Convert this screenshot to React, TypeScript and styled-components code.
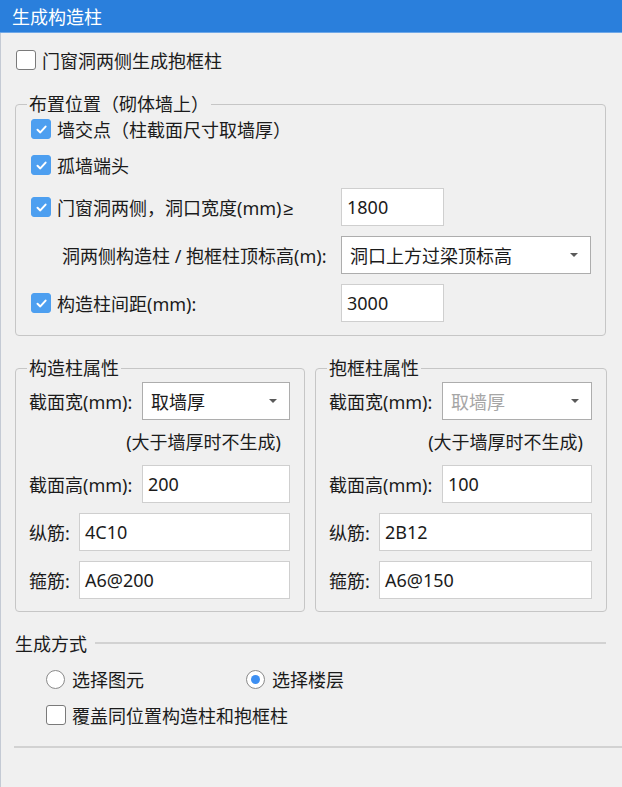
import React from "react";
import styled, { createGlobalStyle } from "styled-components";

const GlobalStyle = createGlobalStyle`
  html, body {
    margin: 0;
    padding: 0;
    background: #f0f0f0;
  }
  body {
    font-family: "Noto Sans", "Noto Sans CJK SC", sans-serif;
    font-size: 18px;
    color: #1b1b1b;
  }
`;

const Window = styled.div`
  width: 622px;
  height: 787px;
  box-sizing: border-box;
  background: #f0f0f0;
  display: flex;
  flex-direction: column;
  overflow: hidden;
`;

const TitleBar = styled.div`
  height: 33px;
  flex-shrink: 0;
  background: #2a7fdc;
  color: #fff;
  display: flex;
  align-items: center;
  padding-left: 12px;
  border-bottom: 1px solid #6fa8e8;
  box-sizing: border-box;
`;

const Body = styled.div`
  flex: 1;
  border-left: 1px solid #c4cad4;
  display: flex;
  flex-direction: column;
`;

const Content = styled.div`
  padding: 0 16px 0 14px;
  display: flex;
  flex-direction: column;
`;

const CheckRow = styled.label<{ $height?: number; $indent?: number }>`
  display: flex;
  align-items: center;
  gap: 6px;
  height: ${(p) => p.$height ?? 26}px;
  margin-left: ${(p) => p.$indent ?? 0}px;
  white-space: nowrap;
`;

const Box = styled.span<{ $checked?: boolean }>`
  width: 20px;
  height: 20px;
  box-sizing: border-box;
  border-radius: 3px;
  flex-shrink: 0;
  display: inline-flex;
  align-items: center;
  justify-content: center;
  background: ${(p) => (p.$checked ? "#4d9ff0" : "#fff")};
  border: 1px solid ${(p) => (p.$checked ? "#4d9ff0" : "#7a7a7a")};
`;

const Group = styled.fieldset<{ $top: number }>`
  margin: ${(p) => p.$top}px 0 0 0;
  padding: 2px 14px 13px 15px;
  border: 1px solid #c6c6c6;
  border-radius: 4px;
  min-width: 0;
  display: flex;
  flex-direction: column;
  gap: 10px;
`;

const Legend = styled.legend<{ $shift: number }>`
  padding: 0 2px;
  margin-left: ${(p) => p.$shift}px;
  line-height: 20px;
  height: 20px;
`;

const FieldRow = styled.div<{ $labelWidth: number; $indent?: number }>`
  display: grid;
  grid-template-columns: ${(p) => p.$labelWidth}px 1fr;
  align-items: center;
  height: 38px;
  padding-left: ${(p) => p.$indent ?? 0}px;
  white-space: nowrap;
`;

const Sign = styled.span`
  font-family: "Liberation Sans", sans-serif;
  margin-left: 2px;
`;

const TextBox = styled.div<{ $width?: number }>`
  height: 38px;
  width: ${(p) => (p.$width ? `${p.$width}px` : "auto")};
  box-sizing: border-box;
  background: #fff;
  border: 1px solid #cfcfcf;
  padding-left: 5px;
  display: flex;
  align-items: center;
`;

const Select = styled.div<{ $width?: number; $disabled?: boolean }>`
  height: 38px;
  width: ${(p) => (p.$width ? `${p.$width}px` : "auto")};
  box-sizing: border-box;
  background: #fff;
  border: 1px solid #adadad;
  padding: 0 12px 0 8px;
  display: flex;
  align-items: center;
  justify-content: space-between;
  color: ${(p) => (p.$disabled ? "#a6a6a6" : "inherit")};
`;

const Caret = styled.span`
  width: 0;
  height: 0;
  border-left: 4px solid transparent;
  border-right: 4px solid transparent;
  border-top: 4px solid #5a5a5a;
`;

const Columns = styled.div`
  display: grid;
  grid-template-columns: 290px 292px;
  gap: 10px;
  margin-top: 22px;
`;

const PropGroup = styled(Group)`
  padding: 4px 14px 12px 13px;
`;

const Hint = styled.div`
  height: 25px;
  line-height: 25px;
  text-align: right;
  padding-right: 9px;
`;

const SectionHead = styled.div`
  display: flex;
  align-items: center;
  height: 24px;
  margin-top: 19px;
  gap: 8px;
`;

const Rule = styled.div`
  flex: 1;
  height: 2px;
  background: #d2d2d2;
`;

const RadioRow = styled.div`
  display: flex;
  height: 24px;
  margin-top: 12px;
  padding-left: 31px;
`;

const RadioItem = styled.label<{ $width?: number }>`
  display: flex;
  align-items: center;
  gap: 7px;
  width: ${(p) => (p.$width ? `${p.$width}px` : "auto")};
`;

const RadioCircle = styled.span<{ $on?: boolean }>`
  width: 19px;
  height: 19px;
  box-sizing: border-box;
  border-radius: 50%;
  border: 1px solid #8a8a8a;
  background: #fff;
  display: inline-flex;
  align-items: center;
  justify-content: center;
  &::after {
    content: "";
    width: 9px;
    height: 9px;
    border-radius: 50%;
    background: ${(p) => (p.$on ? "#3d8ff2" : "transparent")};
  }
`;

const BottomRule = styled.div`
  height: 2px;
  background: #d2d2d2;
  margin: 18px 0 0 13px;
`;

const Check = ({ checked }: { checked?: boolean }) => (
  <Box $checked={checked}>
    {checked && (
      <svg width="13" height="13" viewBox="0 0 13 13">
        <path d="M2.5 6.8 L5.3 9.4 L10.6 3.6" fill="none" stroke="#fff" strokeWidth="2" strokeLinecap="round" strokeLinejoin="round" />
      </svg>
    )}
  </Box>
);

type Props = {
  title: string;
  width: string;
  disabled?: boolean;
  height: string;
  main: string;
  stirrup: string;
};

const ColumnProps = ({ title, width, disabled, height, main, stirrup }: Props) => (
  <PropGroup $top={0}>
    <Legend $shift={-2}>{title}</Legend>
    <FieldRow $labelWidth={113}>
      <span>截面宽(mm):</span>
      <Select $disabled={disabled}>
        <span>{width}</span>
        <Caret />
      </Select>
    </FieldRow>
    <Hint>(大于墙厚时不生成)</Hint>
    <FieldRow $labelWidth={113}>
      <span>截面高(mm):</span>
      <TextBox>{height}</TextBox>
    </FieldRow>
    <FieldRow $labelWidth={50}>
      <span>纵筋:</span>
      <TextBox>{main}</TextBox>
    </FieldRow>
    <FieldRow $labelWidth={50}>
      <span>箍筋:</span>
      <TextBox>{stirrup}</TextBox>
    </FieldRow>
  </PropGroup>
);

export default function App() {
  return (
    <>
      <GlobalStyle />
      <Window>
        <TitleBar>生成构造柱</TitleBar>
        <Body>
          <Content>
            <CheckRow $height={24} $indent={1} style={{ marginTop: 15 }}>
              <Check />
              <span>门窗洞两侧生成抱框柱</span>
            </CheckRow>

            <Group $top={22}>
              <Legend $shift={-4}>布置位置（砌体墙上）</Legend>
              <CheckRow>
                <Check checked />
                <span>墙交点（柱截面尺寸取墙厚）</span>
              </CheckRow>
              <CheckRow>
                <Check checked />
                <span>孤墙端头</span>
              </CheckRow>
              <FieldRow $labelWidth={310}>
                <CheckRow>
                  <Check checked />
                  <span>
                    门窗洞两侧，洞口宽度(mm)<Sign>≥</Sign>
                  </span>
                </CheckRow>
                <TextBox $width={103}>1800</TextBox>
              </FieldRow>
              <FieldRow $labelWidth={279} $indent={31}>
                <span>洞两侧构造柱 / 抱框柱顶标高(m):</span>
                <Select $width={250}>
                  <span>洞口上方过梁顶标高</span>
                  <Caret />
                </Select>
              </FieldRow>
              <FieldRow $labelWidth={310}>
                <CheckRow>
                  <Check checked />
                  <span>构造柱间距(mm):</span>
                </CheckRow>
                <TextBox $width={103}>3000</TextBox>
              </FieldRow>
            </Group>

            <Columns>
              <ColumnProps title="构造柱属性" width="取墙厚" height="200" main="4C10" stirrup="A6@200" />
              <ColumnProps title="抱框柱属性" width="取墙厚" disabled height="100" main="2B12" stirrup="A6@150" />
            </Columns>

            <SectionHead>
              <span>生成方式</span>
              <Rule />
            </SectionHead>
            <RadioRow>
              <RadioItem $width={200}>
                <RadioCircle />
                <span>选择图元</span>
              </RadioItem>
              <RadioItem>
                <RadioCircle $on />
                <span>选择楼层</span>
              </RadioItem>
            </RadioRow>
            <CheckRow $indent={31} style={{ marginTop: 11 }}>
              <Check />
              <span>覆盖同位置构造柱和抱框柱</span>
            </CheckRow>
          </Content>
          <BottomRule />
        </Body>
      </Window>
    </>
  );
}
